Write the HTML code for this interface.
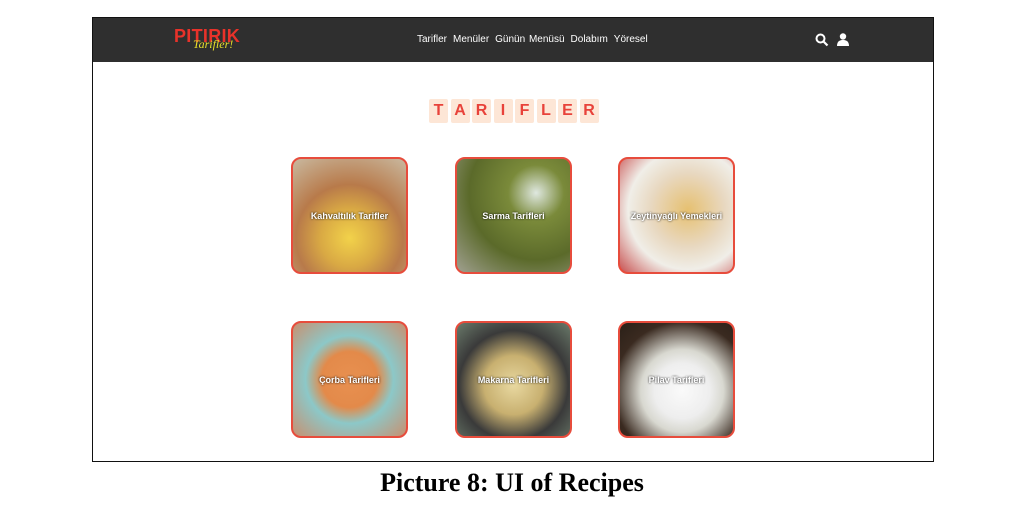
<!DOCTYPE html>
<html><head><meta charset="utf-8"><style>
body{margin:0;width:1024px;height:531px;background:#fff;position:relative;overflow:hidden;font-family:"Liberation Sans",sans-serif}
.frame{position:absolute;left:92px;top:17px;width:840px;height:443px;border:1px solid #111;background:#fff}
.nav{position:absolute;left:0;top:0;width:840px;height:44px;background:#2f2f2f}
.logo{position:absolute;left:81px;top:8px;color:#e8322a;font-weight:900;font-size:18px;letter-spacing:0.3px;font-family:"Liberation Sans",sans-serif}
.logo2{position:absolute;left:100px;top:19px;color:#e8e02a;font-style:italic;font-size:12px;font-family:"Liberation Serif",serif}
.links{position:absolute;left:324px;top:16px;color:#fff;font-size:10px;word-spacing:1px}
.links span{margin-right:6px}
.t{position:absolute;top:81px;left:336px;display:flex;gap:2.5px}
.t div{width:19px;height:24px;background:#fde6d6;color:#e8423a;font-weight:bold;font-size:16px;text-align:center;line-height:24px;border-radius:2px}
.c{position:absolute;width:113px;height:113px;border:2px solid #e74c3c;border-radius:10px;color:#fff;font-weight:bold;font-size:9px;display:flex;align-items:center;justify-content:center;text-shadow:0 0 2px #000}
.cap{position:absolute;top:468px;width:1024px;text-align:center;font-family:"Liberation Serif",serif;font-weight:bold;font-size:26px}
</style></head><body>
<div class="frame">
<div class="nav">
<div class="logo">PITIRIK</div><div class="logo2">Tarifler!</div>
<div class="links"><span>Tarifler</span><span>Menüler</span><span>Günün Menüsü</span><span>Dolabım</span><span>Yöresel</span></div>
<svg style="position:absolute;left:722px;top:15px" width="14" height="14" viewBox="0 0 14 14"><circle cx="5.5" cy="5.5" r="4" stroke="#fff" stroke-width="2" fill="none"/><path d="M8.5 8.5L12.5 12.5" stroke="#fff" stroke-width="2.2"/></svg>
<svg style="position:absolute;left:744px;top:15px" width="12" height="13" viewBox="0 0 12 13"><circle cx="6" cy="3.5" r="3.2" fill="#fff"/><path d="M0 13C0 8 3 7 6 7S12 8 12 13Z" fill="#fff"/></svg>
</div>
<div class="t"><div>T</div><div>A</div><div>R</div><div>I</div><div>F</div><div>L</div><div>E</div><div>R</div></div>
</div>
<div class="c" style="left:291px;top:157px;background:radial-gradient(circle at 50% 70%,#f2d24a 0,#d9a944 30%,#b87a4a 55%,#c9b9a0 100%)">Kahvaltılık Tarifler</div>
<div class="c" style="left:455px;top:157px;background:radial-gradient(circle at 70% 30%,#dfe8e0 0,#7a8a3a 25%,#5b6a2a 60%,#a0a090 100%)">Sarma Tarifleri</div>
<div class="c" style="left:618px;top:157px;background:radial-gradient(circle at 60% 45%,#e6c070 0,#e8d8c0 40%,#f0eee8 65%,#c85050 100%)">Zeytinyağlı Yemekleri</div>
<div class="c" style="left:291px;top:321px;background:radial-gradient(circle at 50% 50%,#e89050 0,#e38a4a 35%,#8cc8c8 55%,#c89070 100%)">Çorba Tarifleri</div>
<div class="c" style="left:455px;top:321px;background:radial-gradient(circle at 50% 55%,#e8d8a0 0,#c8b070 35%,#3a3a3a 65%,#6a7a6a 100%)">Makarna Tarifleri</div>
<div class="c" style="left:618px;top:321px;background:radial-gradient(circle at 55% 60%,#fafafa 0,#eeeeee 30%,#d8d8d0 45%,#3a2a20 75%,#2a2018 100%)">Pilav Tarifleri</div>
<div class="cap">Picture 8: UI of Recipes</div>
</body></html>
